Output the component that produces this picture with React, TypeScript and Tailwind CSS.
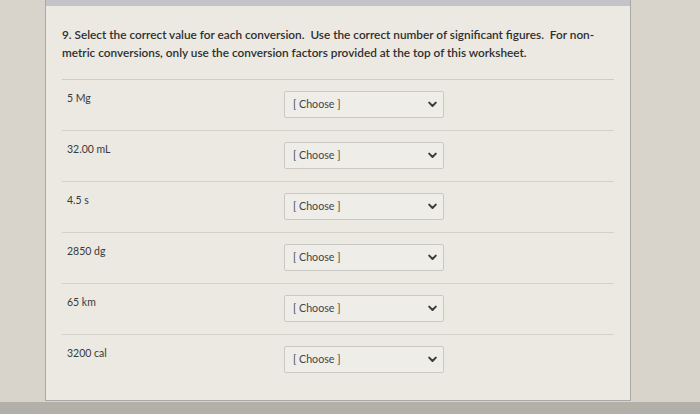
const rows = ['5 Mg', '32.00 mL', '4.5 s', '2850 dg', '65 km', '3200 cal']

function Chevron() {
  return (
    <svg width="9" height="7" viewBox="0 0 9 7" aria-hidden="true">
      <path d="M1.2 1.6 L4.5 5 L7.8 1.6" fill="none" stroke="#3b3b3b" strokeWidth="2" strokeLinecap="round" strokeLinejoin="round" />
    </svg>
  )
}

export default function App() {
  return (
    <div
      className="flex h-[414px] w-[700px] flex-col overflow-hidden bg-[#d9d4cb] text-[#3a3a3a]"
      style={{ fontFamily: 'Lato, "Open Sans", sans-serif' }}
    >
      <div className="ml-[45px] flex h-[401px] w-[586px] flex-col border-x border-b border-[#a9a8a6] bg-[#ebe9e1]">
        <div className="h-[6px] bg-[#c3c4c9]" />
        <div className="px-[16px]">
          <p className="pt-[20px] text-[11.8px] font-semibold leading-[18px] text-[#2f2f2f]">
            9. Select the correct value for each conversion.&nbsp; Use the correct number of significant figures.&nbsp; For non-
            <br />
            metric conversions, only use the conversion factors provided at the top of this worksheet.
          </p>
          <div className="mt-[17px] border-t border-[#cfcdc6]">
            {rows.map((label) => (
              <div key={label} className="flex h-[51px] border-b border-[#d3d1ca] last:border-b-0">
                <div className="w-[222px] pl-[5px] pt-[12px] text-[10.5px] leading-[12px]">{label}</div>
                <div className="pt-[11px]">
                  <div className="flex h-[27px] w-[160px] items-center justify-between rounded-[2px] border border-[#c9c8c3] bg-[#eeede7] pl-[8px] pr-[6px]">
                    <span className="text-[10.7px] text-[#444]">[ Choose ]</span>
                    <Chevron />
                  </div>
                </div>
              </div>
            ))}
          </div>
        </div>
      </div>
      <div className="mt-auto h-[12px] bg-[#b3b0aa]" />
    </div>
  )
}
